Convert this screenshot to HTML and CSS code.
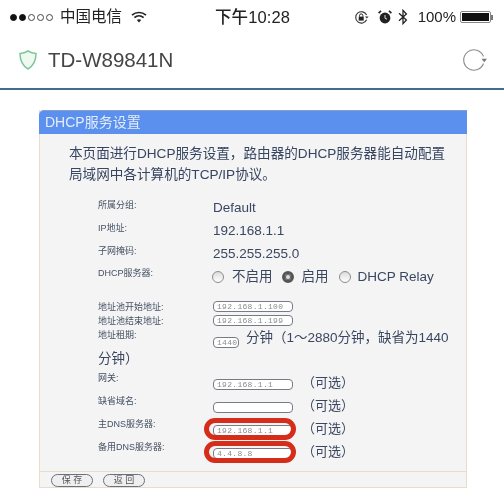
FILE: index.html
```html
<!DOCTYPE html>
<html lang="zh">
<head>
<meta charset="utf-8">
<title>TD-W89841N</title>
<link rel="stylesheet" href="styles.css">
</head>
<body>
<div class="status">
  <div class="status-left">
    <span class="dot on"></span><span class="dot on"></span><span class="dot"></span><span class="dot"></span><span class="dot"></span>
    <span class="carrier">中国电信</span>
    <svg class="wifi" width="16" height="12" viewBox="0 0 16 12"><path d="M1 4.2C5 .6 11 .6 15 4.2" fill="none" stroke="#222" stroke-width="1.7"/><path d="M3.4 6.6c2.7-2.3 6.5-2.3 9.2 0" fill="none" stroke="#222" stroke-width="1.7"/><path d="M5.8 8.9c1.3-1 3.1-1 4.4 0L8 11.4z" fill="#222"/></svg>
  </div>
  <div class="time">下午10:28</div>
  <div class="status-right">
    <svg width="15" height="15" viewBox="0 0 15 15"><path d="M12.6 9.8A5.7 5.7 0 1 1 12.6 5" fill="none" stroke="#333" stroke-width="1.1"/><path d="M11 6.6h3.6l-1.8 2z" fill="#333"/><rect x="4.7" y="6.6" width="5" height="4" fill="#222"/><path d="M5.5 6.6V5.6a1.7 1.7 0 0 1 3.4 0v1" fill="none" stroke="#222" stroke-width="1"/></svg>
    <svg class="alarm" width="14" height="14" viewBox="0 0 14 14"><circle cx="7" cy="8" r="5.4" fill="#222"/><path d="M7 5v3.2l2 1" fill="none" stroke="#ddd" stroke-width="1"/><path d="M.6 3.2 3 .9M13.4 3.2 11 .9" stroke="#222" stroke-width="1.6"/></svg>
    <svg class="bt" width="10" height="16" viewBox="0 0 10 16"><path d="M1 4.2 8.4 11 5 14.6V1.4L8.4 5 1 11.8" fill="none" stroke="#222" stroke-width="1.3"/></svg>
    <span class="percent">100%</span>
    <span class="battery"><span class="battery-fill"></span></span><span class="battery-tip"></span>
  </div>
</div>
<header class="nav">
  <svg width="20" height="22" viewBox="0 0 20 22"><path d="M10 2c2.400 1.500 5 2.300 8 2.500 0 6.500-2 12-8 15.500C4 16.500 2 11 2 4.500 5 4.300 7.600 3.500 10 2z" fill="#eef9f1" stroke="#7fc79a" stroke-width="1.500"/></svg>
  <span class="nav-title">TD-W89841N</span>
  <svg class="reload" width="27" height="24" viewBox="0 0 27 24"><path d="M21.500 8.500A10.200 10.200 0 1 0 21.500 15.500" fill="none" stroke="#8a8a8a" stroke-width="1.100"/><path d="M19.500 10.800h5.500l-2.750 3.500z" fill="#777"/></svg>
</header>
<main class="page">
  <section class="panel">
    <h1 class="panel-title">DHCP服务设置</h1>
    <p class="intro">本页面进行DHCP服务设置，路由器的DHCP服务器能自动配置局域网中各计算机的TCP/IP协议。</p>
    <div class="form">
      <div class="row"><span class="label">所属分组:</span><span class="value">Default</span></div>
      <div class="row"><span class="label">IP地址:</span><span class="value">192.168.1.1</span></div>
      <div class="row row-short"><span class="label">子网掩码:</span><span class="value">255.255.255.0</span></div>
      <div class="row row-radio">
        <span class="label">DHCP服务器:</span>
        <span class="value radios">
          <span class="radio"></span><span class="radio-text">不启用</span>
          <span class="radio checked"></span><span class="radio-text">启用</span>
          <span class="radio"></span><span class="radio-text">DHCP Relay</span>
        </span>
      </div>
      <div class="row row-tight"><span class="label">地址池开始地址:</span><span class="input">192.168.1.100</span></div>
      <div class="row row-tight"><span class="label">地址池结束地址:</span><span class="input">192.168.1.199</span></div>
      <div class="row row-lease">
        <span class="label">地址租期:</span>
        <span class="input input-short">1440</span>
        <span class="value lease-text">分钟（1～2880分钟，缺省为1440</span>
      </div>
      <div class="wrapped">分钟）</div>
      <div class="row"><span class="label">网关:</span><span class="input input-low">192.168.1.1</span><span class="value optional">（可选）</span></div>
      <div class="row"><span class="label">缺省域名:</span><span class="input input-low"></span><span class="value optional">（可选）</span></div>
      <div class="row"><span class="label">主DNS服务器:</span><span class="input input-low input-ringed">192.168.1.1<span class="ring"></span></span><span class="value optional">（可选）</span></div>
      <div class="row"><span class="label">备用DNS服务器:</span><span class="input input-low input-ringed">4.4.8.8<span class="ring"></span></span><span class="value optional">（可选）</span></div>
    </div>
    <footer class="actions">
      <span class="btn">保 存</span>
      <span class="btn">返 回</span>
    </footer>
  </section>
</main>
</body>
</html>
```
FILE: styles.css
```css
* { box-sizing: border-box; }
html, body { margin: 0; padding: 0; }
body {
  width: 504px;
  height: 492px;
  overflow: hidden;
  background: #fff;
  font-family: "Liberation Sans", "Noto Sans CJK SC", sans-serif;
  color: #3d4a5c;
  filter: blur(0.4px);
}
.status {
  display: grid;
  grid-template-columns: 205px auto 1fr;
  align-items: center;
  height: 34px;
  padding: 0 11px 0 10px;
  color: #222;
}
.status-left { display: flex; align-items: center; }
.dot {
  width: 7px;
  height: 7px;
  margin-right: 2px;
  border: 1px solid #444;
  border-radius: 50%;
}
.dot.on { background: #111; border-color: #111; }
.carrier { margin-left: 5px; font-size: 15.500px; line-height: 20px; }
.wifi { margin-left: 9px; }
.time { font-size: 16.500px; line-height: 20px; font-weight: 500; letter-spacing: 0.100px; }
.status-right { display: flex; align-items: center; justify-content: flex-end; }
.alarm { margin-left: 9px; }
.bt { margin-left: 6px; }
.percent { margin-left: 10px; font-size: 15px; line-height: 20px; }
.battery {
  display: block;
  width: 31px;
  height: 12px;
  margin-left: 4px;
  padding: 1px;
  border: 1px solid #888;
  border-radius: 2px;
}
.battery-fill { display: block; height: 100%; background: #111; }
.battery-tip { width: 2px; height: 5px; background: #777; }
.nav {
  display: flex;
  align-items: center;
  height: 56px;
  padding: 0 15px 2px 18px;
  border-bottom: 2px solid #3f6d8e;
}
.nav-title { margin-left: 10px; font-size: 20.500px; color: #454545; }
.reload { margin-left: auto; }
.page { padding: 20px 37px 0 39px; }
.panel {
  height: 378px;
  border: 1px solid #e8dccd;
  border-top: 0;
  background: #f5f4f5;
  display: flex;
  flex-direction: column;
}
.panel-title {
  margin: 0 -1px;
  height: 24px;
  padding-left: 6px;
  border-top: 1px solid #7f9fd6;
  border-radius: 5px 0 0 0;
  background: #5c90ee;
  color: #e3ecfa;
  font-size: 14px;
  font-weight: 400;
  line-height: 23px;
}
.intro {
  margin: 9px 0 0;
  padding: 0 20px 0 29px;
  font-size: 13.600px;
  line-height: 21px;
  color: #364560;
}
.form { margin: 13px 0 0 58px; }
.row { display: flex; align-items: flex-start; height: 23px; }
.row-short { height: 22px; }
.row-radio { height: 34px; }
.row-tight { height: 14px; }
.row-lease { height: 21px; }
.label {
  width: 115px;
  flex: none;
  font-size: 9px;
  line-height: 14px;
  color: #445062;
}
.value { margin-top: 2px; font-size: 13.500px; line-height: 16px; color: #3a4760; white-space: nowrap; }
.radios { display: flex; align-items: center; margin-top: 3px; }
.radio {
  width: 12px;
  height: 12px;
  margin-left: -1px;
  border: 1px solid #8c8c8c;
  border-radius: 50%;
  background: linear-gradient(#dcdcdc, #fff);
}
.radio.checked { background: #ddd; border: 3px solid #555; box-shadow: inset 0 0 0 1px #666; }
.radio-text { margin: 0 10px 0 8px; }
.radio.checked + .radio-text { margin-right: 11px; }
.radio-text:last-child { margin-left: 7px; }
.input {
  position: relative;
  flex: none;
  width: 80px;
  height: 11px;
  margin-top: 1px;
  padding-left: 3px;
  border: 1px solid #777b85;
  border-radius: 4px;
  background: #fff;
  font-family: "Liberation Mono", monospace;
  font-size: 8px;
  line-height: 9px;
  letter-spacing: 0.300px;
  color: #8b8b8b;
}
.input-short { width: 26px; margin-top: 9px; }
.lease-text { margin: 2px 0 0 7px; }
.wrapped { height: 22px; font-size: 13.500px; line-height: 20px; color: #3a4760; }
.input-low { margin-top: 8px; }
.optional { margin: 4px 0 0 9px; font-size: 13px; }
.ring {
  position: absolute;
  left: -10px;
  top: -8px;
  width: 92px;
  height: 22px;
  border: 5px solid #d62c1a;
  border-radius: 11px;
}
.actions {
  display: flex;
  align-items: flex-start;
  gap: 10px;
  margin-top: auto;
  height: 16px;
  padding: 2px 0 0 11px;
  border-top: 1px solid #e8dccd;
}
.btn {
  width: 42px;
  height: 13px;
  border: 1px solid #6b7080;
  border-radius: 7px;
  background: #f0eff0;
  font-size: 9px;
  line-height: 11px;
  text-align: center;
  color: #555;
}
```
